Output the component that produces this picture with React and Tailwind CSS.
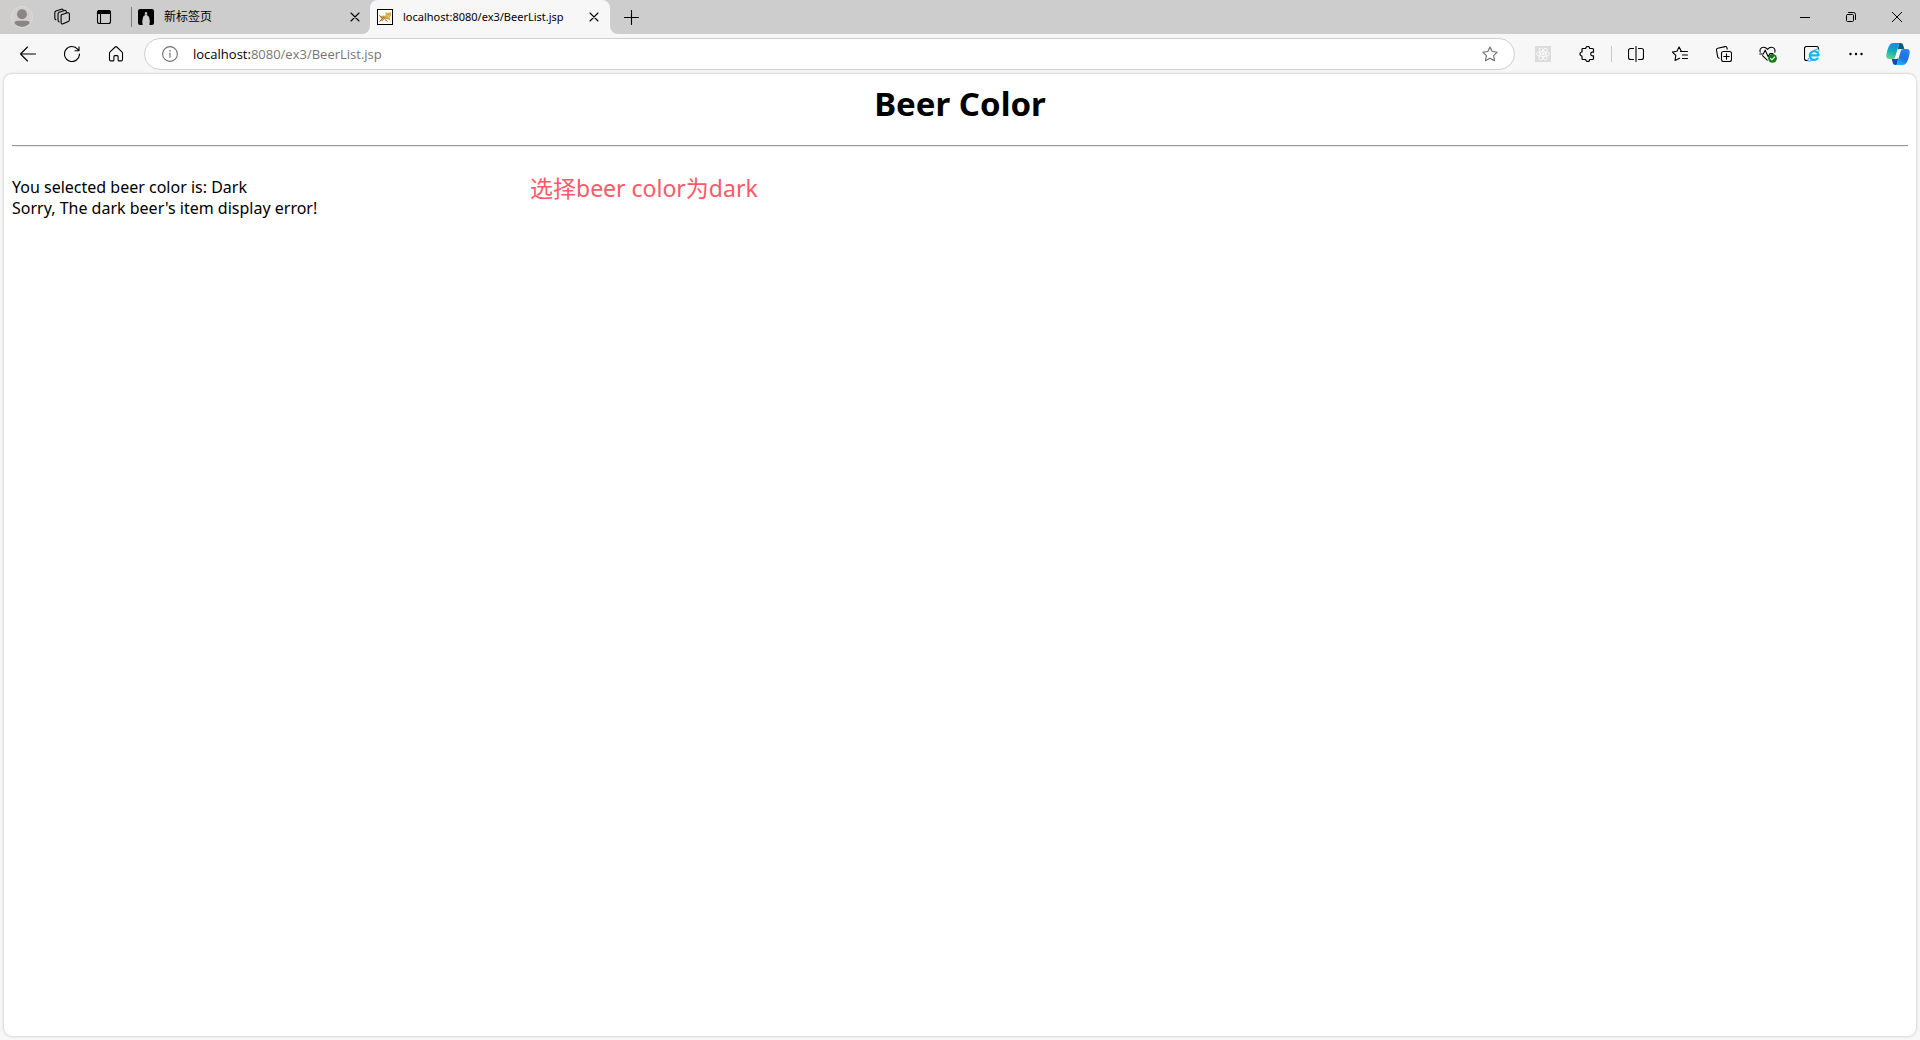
const line = {
  fill: 'none',
  stroke: 'currentColor',
  strokeWidth: 1.1,
  strokeLinecap: 'round',
  strokeLinejoin: 'round',
};

function Icon({ children, size = 16, ...rest }) {
  return (
    <svg width={size} height={size} viewBox={`0 0 ${size} ${size}`} aria-hidden="true" {...line} {...rest}>
      {children}
    </svg>
  );
}

function ToolButton({ label, children }) {
  return (
    <button type="button" aria-label={label} className="flex h-8 w-11 shrink-0 items-center justify-center">
      {children}
    </button>
  );
}

function WindowButton({ label, children }) {
  return (
    <button type="button" aria-label={label} className="flex h-full w-[46px] items-center justify-center">
      {children}
    </button>
  );
}

function CloseTab({ label }) {
  return (
    <button type="button" aria-label={label} className="flex h-6 w-6 shrink-0 items-center justify-center">
      <Icon size={10}>
        <path d="M1 1l8 8M9 1L1 9" />
      </Icon>
    </button>
  );
}

function TabCorner({ flip }) {
  return (
    <svg
      width="8"
      height="8"
      viewBox="0 0 8 8"
      aria-hidden="true"
      className={flip ? 'absolute bottom-0 left-full' : 'absolute right-full bottom-0'}
    >
      <path d={flip ? 'M0 0v8h8A8 8 0 0 1 0 0z' : 'M8 0v8H0A8 8 0 0 0 8 0z'} fill="#f7f7f7" />
    </svg>
  );
}

function TabBar() {
  return (
    <header className="flex h-[34px] items-center bg-[#cdcdcd] pl-0.5">
      <button type="button" aria-label="Profile" className="flex h-full w-10 items-center justify-center">
        <svg width="22" height="22" viewBox="0 0 22 22" aria-hidden="true">
          <clipPath id="avatar">
            <circle cx="11" cy="11" r="10" />
          </clipPath>
          <circle cx="11" cy="11" r="10.5" fill="#d2d0ce" stroke="#dcdbd9" />
          <g clipPath="url(#avatar)" fill="#8a8683">
            <circle cx="11" cy="8.2" r="5" />
            <path d="M3.2 22v-4c0-2 1.3-3.2 3.3-3.2h9c2 0 3.300 1.200 3.300 3.200v4z" />
          </g>
        </svg>
      </button>
      <button type="button" aria-label="Workspaces" className="flex h-full w-10 items-center justify-center">
        <Icon size={18}>
          <path d="M8.300 6.700l6.200-1.900c1-.3 1.900.2 1.900 1.300v5.700c0 .8-.4 1.300-1.100 1.600l-5.200 2.400c-1.100.5-2-.1-2-1.200V8.200c0-.8.1-1.200.2-1.500z" />
          <path d="M13.300 4.500V3.700c0-1-.8-1.500-1.700-1.200L6.200 4.300c-.8.300-1.200.8-1.200 1.600v6.200c0 .9.400 1.500 1.200 1.800" />
          <path d="M10.200 2.200C10 1.300 9.200.9 8.400 1.200L3 3c-.8.300-1.200.9-1.200 1.700v5.200c0 .9.400 1.500 1.100 1.900" />
        </Icon>
      </button>
      <button type="button" aria-label="Tab actions" className="flex h-full w-11 items-center justify-center">
        <Icon size={16}>
          <rect x="1.500" y="1.500" width="13" height="13" rx="2" />
          <path d="M1.500 4.500v-1a2 2 0 0 1 2-2h9a2 2 0 0 1 2 2v1z" fill="currentColor" />
          <path d="M4.500 5v9.500" />
        </Icon>
      </button>
      <span className="ml-[5px] h-5 w-px bg-[#7c7c7c]" />

      <nav aria-label="Tabs" className="flex h-full">
        <div className="flex h-full w-[238px] items-center pr-[3px] pl-1.5">
          <svg width="16" height="16" viewBox="0 0 16 16" aria-hidden="true" className="shrink-0">
            <rect width="16" height="16" rx="2" fill="#000" />
            <path d="M6.800 4.500c.1-1 .6-1.500 1.300-1.400s1.200.6 1.100 1.400l-.1 2c1.300.3 2 1.200 2.200 2.600l.5 3.200-.4 3.700H4.700l-.5-3.500.7-3.500c.2-1.300.8-2.100 1.900-2.400z" fill="#cdcdcd" />
            <path d="M7.400 5h1.200l-.6.900z" fill="#000" />
          </svg>
          <a href="#newtab" className="ml-2.5 flex-1 text-xs">新标签页</a>
          <CloseTab label="Close 新标签页" />
        </div>
        <div className="relative flex h-full w-60 items-center rounded-t-lg bg-[#f7f7f7] pr-1 pl-[7px]">
          <TabCorner />
          <TabCorner flip />
          <svg width="16" height="16" viewBox="0 0 16 16" aria-hidden="true" className="shrink-0">
            <rect x=".5" y=".5" width="15" height="15" fill="#fffdf4" stroke="#000" />
            <path d="M3 7.500l3-1 2 .4 1-1.400-.6-2.500 2 1 2.200-.2L13.800 2.800l.2 3.700-1.500 2 1.300 3.300-3-1.600-2.600-.4L5.500 12 3 12.500l1.500-2.500z" fill="#d9a646" />
            <path d="M2 6.500l2 1 1.500 2L2.500 12.500M8 10.500l2.500 2M6 8l2 1.500" fill="none" stroke="#786b58" strokeWidth=".9" />
            <path d="M10 6.500l1 1 1.500-1" fill="none" stroke="#fff1c4" strokeWidth=".7" />
          </svg>
          <a href="#beerlist" className="ml-2.5 flex-1 font-['Noto_Sans',sans-serif] text-[11px] whitespace-nowrap">
            localhost:8080/ex3/BeerList.jsp
          </a>
          <CloseTab label="Close BeerList.jsp" />
        </div>
      </nav>
      <button type="button" aria-label="New tab" className="flex h-full w-[43px] items-center justify-center">
        <Icon size={15}>
          <path d="M7.500.5v14M.5 7.500h14" />
        </Icon>
      </button>

      <div className="ml-auto flex h-full">
        <WindowButton label="Minimize">
          <Icon size={10} strokeWidth="1" strokeLinecap="butt">
            <path d="M0 5.500h10" />
          </Icon>
        </WindowButton>
        <WindowButton label="Restore">
          <Icon size={10} strokeWidth="1">
            <rect x=".5" y="2.500" width="7" height="7" rx="1" />
            <path d="M2.500.5h5a2 2 0 0 1 2 2v5" />
          </Icon>
        </WindowButton>
        <WindowButton label="Close">
          <Icon size={10} strokeWidth="1">
            <path d="M.3.3l9.400 9.400M9.700.3L.3 9.700" />
          </Icon>
        </WindowButton>
      </div>
    </header>
  );
}

function AddressBar() {
  return (
    <div className="ml-1.5 flex h-8 flex-1 items-center rounded-full border border-[#cfcfcf] bg-white pr-4">
      <button type="button" aria-label="Site information" className="ml-[17px] flex h-4 w-4 items-center justify-center text-[#6e6e6e]">
        <Icon size={16}>
          <circle cx="8" cy="8" r="7.400" />
          <path d="M8 7.200v4" />
          <path d="M8 4.800v.1" strokeWidth="1.500" />
        </Icon>
      </button>
      <div className="relative ml-[15px] h-5 flex-1 text-[13px] leading-5">
        <span aria-hidden="true" className="pointer-events-none absolute left-0 whitespace-nowrap text-[#767676]">
          <span className="text-black">localhost:</span>8080/ex3/BeerList.jsp
        </span>
        <input
          type="text"
          aria-label="Address"
          defaultValue="localhost:8080/ex3/BeerList.jsp"
          className="w-full bg-transparent text-transparent outline-none"
        />
      </div>
      <button type="button" aria-label="Add to favorites" className="flex h-4 w-4 items-center justify-center text-[#6e6e6e]">
        <Icon size={16}>
          <path d="M8 .9l2.200 4.600 5 .7-3.600 3.500.9 5L8 12.300l-4.500 2.400.9-5L.8 6.200l5-.7z" />
        </Icon>
      </button>
    </div>
  );
}

function Toolbar() {
  return (
    <div className="flex h-10 items-center pl-1.5">
      <ToolButton label="Back">
        <Icon size={16}>
          <path d="M15.500 8H.7M7.500 1L.5 8l7 7" />
        </Icon>
      </ToolButton>
      <ToolButton label="Refresh">
        <Icon size={16}>
          <path d="M15.500 8A7.500 7.500 0 1 1 13.800 3.300L15 4.700M15 .7v4h-4" />
        </Icon>
      </ToolButton>
      <ToolButton label="Home">
        <Icon size={16}>
          <path d="M1.500 7.200c0-.6.2-1 .6-1.400L7.200 1a1.200 1.200 0 0 1 1.600 0l5.100 4.800c.4.4.6.8.6 1.400v6.300c0 .8-.6 1.400-1.400 1.400h-2c-.6 0-1-.4-1-1v-3.300c0-.6-.4-1-1-1H6.900c-.6 0-1 .4-1 1v3.300c0 .6-.4 1-1 1h-2c-.8 0-1.400-.6-1.400-1.400z" />
        </Icon>
      </ToolButton>

      <AddressBar />
      <span className="w-1.5" />

      <ToolButton label="React Developer Tools">
        <svg width="16" height="16" viewBox="0 0 16 16" aria-hidden="true">
          <rect width="16" height="16" fill="#dcdcdc" />
          <g fill="none" stroke="#fafafa" strokeWidth=".9">
            <ellipse cx="8" cy="8" rx="6.500" ry="2.500" />
            <ellipse cx="8" cy="8" rx="6.500" ry="2.500" transform="rotate(60 8 8)" />
            <ellipse cx="8" cy="8" rx="6.500" ry="2.500" transform="rotate(120 8 8)" />
          </g>
          <circle cx="8" cy="8" r="1.300" fill="#fafafa" />
        </svg>
      </ToolButton>
      <ToolButton label="Extensions">
        <Icon size={16} strokeWidth="1.200">
          <path d="M6.700 2.500a2 2 0 0 1 4 0h2.800c.6 0 1 .4 1 1v2.700h-1a1.800 1.800 0 0 0 0 3.600h1v2.700c0 .6-.4 1-1 1h-2.800a2 2 0 0 1-4 0H4c-.6 0-1-.4-1-1V10a2 2 0 0 1 0-4V3.500c0-.6.4-1 1-1z" />
        </Icon>
      </ToolButton>
      <span className="mx-0.5 h-4 w-px bg-[#c8c8c8]" />
      <ToolButton label="Split screen">
        <Icon size={16}>
          <path d="M5.500 2.500h-3a2 2 0 0 0-2 2v7a2 2 0 0 0 2 2h3M10.500 2.500h3a2 2 0 0 1 2 2v7a2 2 0 0 1-2 2h-3M8 .5v15" />
        </Icon>
      </ToolButton>
      <ToolButton label="Favorites">
        <Icon size={16}>
          <path d="M10 5.500h5.500M10.500 9h5M10.500 12.500h5" />
          <path d="M8.400 5.500h1.100L7.100.9 4.900 5.300l-4.500.7 3.400 3.400-.8 5.100 4.600-2.300" />
        </Icon>
      </ToolButton>
      <ToolButton label="Collections">
        <Icon size={16}>
          <rect x="5.500" y="5.500" width="10" height="10" rx="2" />
          <path d="M10.500 7.800v5.400M7.800 10.500h5.400" />
          <path d="M3.300 12.200c-.9-.1-1.400-.6-1.600-1.400L.5 4.200c-.2-1 .3-1.800 1.300-2L9 .6c1-.2 1.800.3 2 1.200l.2 1.300" />
        </Icon>
      </ToolButton>
      <ToolButton label="Browser essentials">
        <Icon size={18}>
          <path d="M1.200 7.200C.4 4.600 1.900 2.200 4.500 2.200c1.700 0 3 .9 4 2.200 1-1.300 2.300-2.200 4-2.200 2.600 0 4.100 2.400 3.300 5M3.500 10.700l4.700 4.500" />
          <path d="M.8 9h3.400l2-3.800 3 6.500L11 8.500h3" />
          <circle cx="13.500" cy="13.300" r="4.400" fill="#107c10" stroke="none" />
          <path d="M11.500 13.400l1.400 1.400 2.700-2.800" stroke="#fff" />
        </Icon>
      </ToolButton>
      <ToolButton label="Internet Explorer mode">
        <Icon size={16}>
          <path d="M3.500 14.500h-1a2 2 0 0 1-2-2V2.500a2 2 0 0 1 2-2h10a2 2 0 0 1 2 2V3" />
          <path d="M14 11.800a4.400 4.400 0 1 1 .6-2.400H6.400" stroke="#1ab3ee" strokeWidth="2.200" strokeLinecap="butt" />
          <path d="M4.500 12.500c-1.500 3 .5 3.400 3 1.900M10 4.500c3.500-2.300 6.200-2 4.700 1.100" stroke="#1ab3ee" strokeWidth="1" />
        </Icon>
      </ToolButton>
      <ToolButton label="Settings and more">
        <Icon size={16} fill="currentColor" stroke="none">
          <circle cx="2.500" cy="8" r="1.200" />
          <circle cx="8" cy="8" r="1.200" />
          <circle cx="13.500" cy="8" r="1.200" />
        </Icon>
      </ToolButton>
      <button type="button" aria-label="Copilot" className="flex h-8 w-10 shrink-0 items-center justify-center">
        <svg width="24" height="24" viewBox="0 0 24 24" aria-hidden="true">
          <defs>
            <linearGradient id="cpLeft" x1="0.600" y1="0" x2="0.300" y2="1">
              <stop offset="0" stopColor="#0d91d8" />
              <stop offset=".5" stopColor="#12a8bd" />
              <stop offset="1" stopColor="#5fd68b" />
            </linearGradient>
            <linearGradient id="cpRight" x1="0.800" y1="0" x2="0.300" y2="1">
              <stop offset="0" stopColor="#2f86ea" />
              <stop offset=".55" stopColor="#1f6fe5" />
              <stop offset="1" stopColor="#19b4f5" />
            </linearGradient>
          </defs>
          <path d="M13 1h1.500c1.600 0 2.300.8 2.700 2.200L18.300 7H14c-1.200 0-2 .6-2.400 1.800z" fill="#0a5a86" />
          <path d="M11 23H9.500c-1.600 0-2.300-.8-2.700-2.200L5.700 17H10c1.200 0 2-.6 2.400-1.800z" fill="#1646b8" />
          <path d="M7.500 1H15c-1.500.2-2 1.200-2.400 2.500L9.400 14.500C8.900 16.200 8.200 17 6.500 17H3.200C1 17 0 15.600.3 13.200 1 8.800 2.200 5.200 3.500 3.200 4.400 1.800 5.700 1 7.500 1z" fill="url(#cpLeft)" />
          <path d="M16.500 23H9c1.500-.2 2-1.200 2.400-2.500l3.200-11c.5-1.700 1.200-2.500 2.900-2.500h3.300c2.200 0 3.200 1.400 2.900 3.800-.7 4.400-1.900 8-3.200 10-.9 1.400-2.200 2.200-4 2.200z" fill="url(#cpRight)" />
          <path d="M12.300 7.300h3c-.6.500-.9 1.300-1.200 2.200l-1.700 5.200c-.4 1.200-1 2-2.400 2H8.600c.5-.5.8-1.200 1-2.200l1.600-5.500c.3-.9.600-1.400 1.100-1.700z" fill="#f7f7f7" />
        </svg>
      </button>
      <span className="w-0.5" />
    </div>
  );
}

export default function App() {
  return (
    <div className="flex min-h-screen flex-col bg-[#f7f7f7] font-['Open_Sans','Noto_Sans_CJK_SC',sans-serif] text-black">
      <TabBar />
      <Toolbar />
      <main className="mx-1 mb-1 flex-1 rounded-lg bg-white px-2 font-['Noto_Sans','Noto_Sans_CJK_SC',sans-serif] shadow-[0_0_3px_rgba(0,0,0,0.25)]">
        <h1 className="pt-2 text-center text-[33px] leading-[43px] font-bold">Beer Color</h1>
        <hr className="mt-5 border-t border-b border-t-[#9a9a9a] border-b-[#eeeeee]" />
        <div className="mt-6 flex items-start">
          <p className="w-[518px] pt-1.5 text-[16px] leading-[21px]">
            You selected beer color is: Dark
            <br />
            Sorry, The dark beer's item display error!
          </p>
          <p className="text-[23px] leading-[34px] text-[#ff5868]">选择beer color为dark</p>
        </div>
      </main>
    </div>
  );
}
